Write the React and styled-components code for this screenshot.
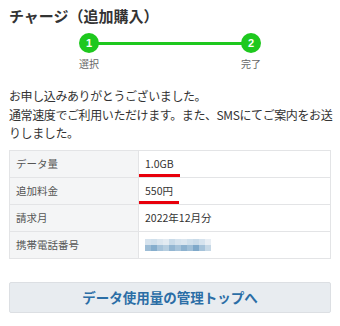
import styled, { createGlobalStyle } from "styled-components";

const GlobalStyle = createGlobalStyle`
    html, body {
        margin: 0;
        padding: 0;
        background: #ffffff;
    }
    body {
        font-family: "Noto Sans CJK JP", "Noto Sans", sans-serif;
        color: #333333;
    }
`;

const Page = styled.div`
    width: 340px;
    padding: 5px 9px 0;
    box-sizing: border-box;
`;

const Title = styled.h1`
    margin: 0;
    font-size: 15px;
    line-height: 22px;
    font-weight: 700;
    color: #333333;
`;

const Stepper = styled.div`
    position: relative;
    width: 182px;
    margin: 6px auto 0;
    display: flex;
    justify-content: space-between;
`;

const StepLine = styled.div`
    position: absolute;
    top: 9px;
    left: 10px;
    right: 10px;
    height: 3px;
    background: #1ec81e;
`;

const Step = styled.div`
    position: relative;
    width: 20px;
    display: flex;
    flex-direction: column;
    align-items: center;
`;

const StepCircle = styled.div`
    width: 20px;
    height: 20px;
    border-radius: 50%;
    background: #1ec81e;
    color: #ffffff;
    font-family: "Liberation Sans", Arial, sans-serif;
    font-size: 11px;
    font-weight: 700;
    display: flex;
    align-items: center;
    justify-content: center;
`;

const StepLabel = styled.div`
    margin-top: 4px;
    font-size: 10px;
    line-height: 14px;
    color: #666666;
    white-space: nowrap;
`;

const Message = styled.p`
    margin: 16px 0 0;
    font-size: 12px;
    line-height: 18.5px;
    letter-spacing: -0.4px;
    color: #333333;
    white-space: nowrap;
`;

const Table = styled.table`
    width: 100%;
    margin-top: 7px;
    border-collapse: collapse;
    font-size: 10.5px;
`;

const LabelCell = styled.th`
    width: 116px;
    height: 26px;
    padding: 0 6px;
    text-align: left;
    font-weight: 400;
    color: #555555;
    background: #f4f5f6;
    border: 1px solid #e3e4e6;
`;

const ValueCell = styled.td`
    padding: 0 6px;
    color: #333333;
    background: #ffffff;
    border: 1px solid #e3e4e6;
`;

const Marked = styled.span`
    position: relative;
    display: inline-block;

    &::after {
        content: "";
        position: absolute;
        left: -6px;
        right: -6px;
        bottom: -6px;
        height: 3px;
        background: #e8000b;
    }
`;

const Mosaic = styled.div`
    display: grid;
    grid-template-columns: repeat(11, 6px);
    grid-auto-rows: 6px;
`;

const Block = styled.div`
    width: 6px;
    height: 6px;
`;

const LinkButton = styled.button`
    display: block;
    width: 100%;
    height: 31px;
    margin-top: 23px;
    padding: 0;
    border: 1px solid #dcdfe3;
    border-radius: 2px;
    background: #e8ecf0;
    color: #2b6ea6;
    font-family: "Noto Sans CJK JP", "Noto Sans", sans-serif;
    font-size: 13.5px;
    font-weight: 700;
    cursor: pointer;
`;

const mosaicColors = [
    ["#d6e3ee", "#d0e0ec", "#dbe6ef", "#e3ebf2", "#c9dbe9", "#d6e3ee", "#dbe6ef", "#d0e0ec", "#c9dbe9", "#d6e3ee", "#e8eef4"],
    ["#9dbdd6", "#86aecd", "#a6c3da", "#b6cee0", "#93b6d2", "#a6c3da", "#8db2cf", "#a0bfd7", "#7fa9ca", "#a6c3da", "#c6d8e6"],
];

const rows = [
    { label: "データ量", value: <Marked>1.0GB</Marked> },
    { label: "追加料金", value: <Marked>550円</Marked> },
    { label: "請求月", value: "2022年12月分" },
    {
        label: "携帯電話番号",
        value: (
            <Mosaic>
                {mosaicColors.flat().map((color, i) => (
                    <Block key={i} style={{ background: color }} />
                ))}
            </Mosaic>
        ),
    },
];

function App() {
    return (
        <>
            <GlobalStyle />
            <Page>
                <Title>チャージ（追加購入）</Title>
                <Stepper>
                    <StepLine />
                    <Step>
                        <StepCircle>1</StepCircle>
                        <StepLabel>選択</StepLabel>
                    </Step>
                    <Step>
                        <StepCircle>2</StepCircle>
                        <StepLabel>完了</StepLabel>
                    </Step>
                </Stepper>
                <Message>
                    お申し込みありがとうございました。
                    <br />
                    通常速度でご利用いただけます。また、SMSにてご案内をお送
                    <br />
                    りしました。
                </Message>
                <Table>
                    <tbody>
                        {rows.map(({ label, value }) => (
                            <tr key={label}>
                                <LabelCell>{label}</LabelCell>
                                <ValueCell>{value}</ValueCell>
                            </tr>
                        ))}
                    </tbody>
                </Table>
                <LinkButton>データ使用量の管理トップへ</LinkButton>
            </Page>
        </>
    );
}

export default App;
